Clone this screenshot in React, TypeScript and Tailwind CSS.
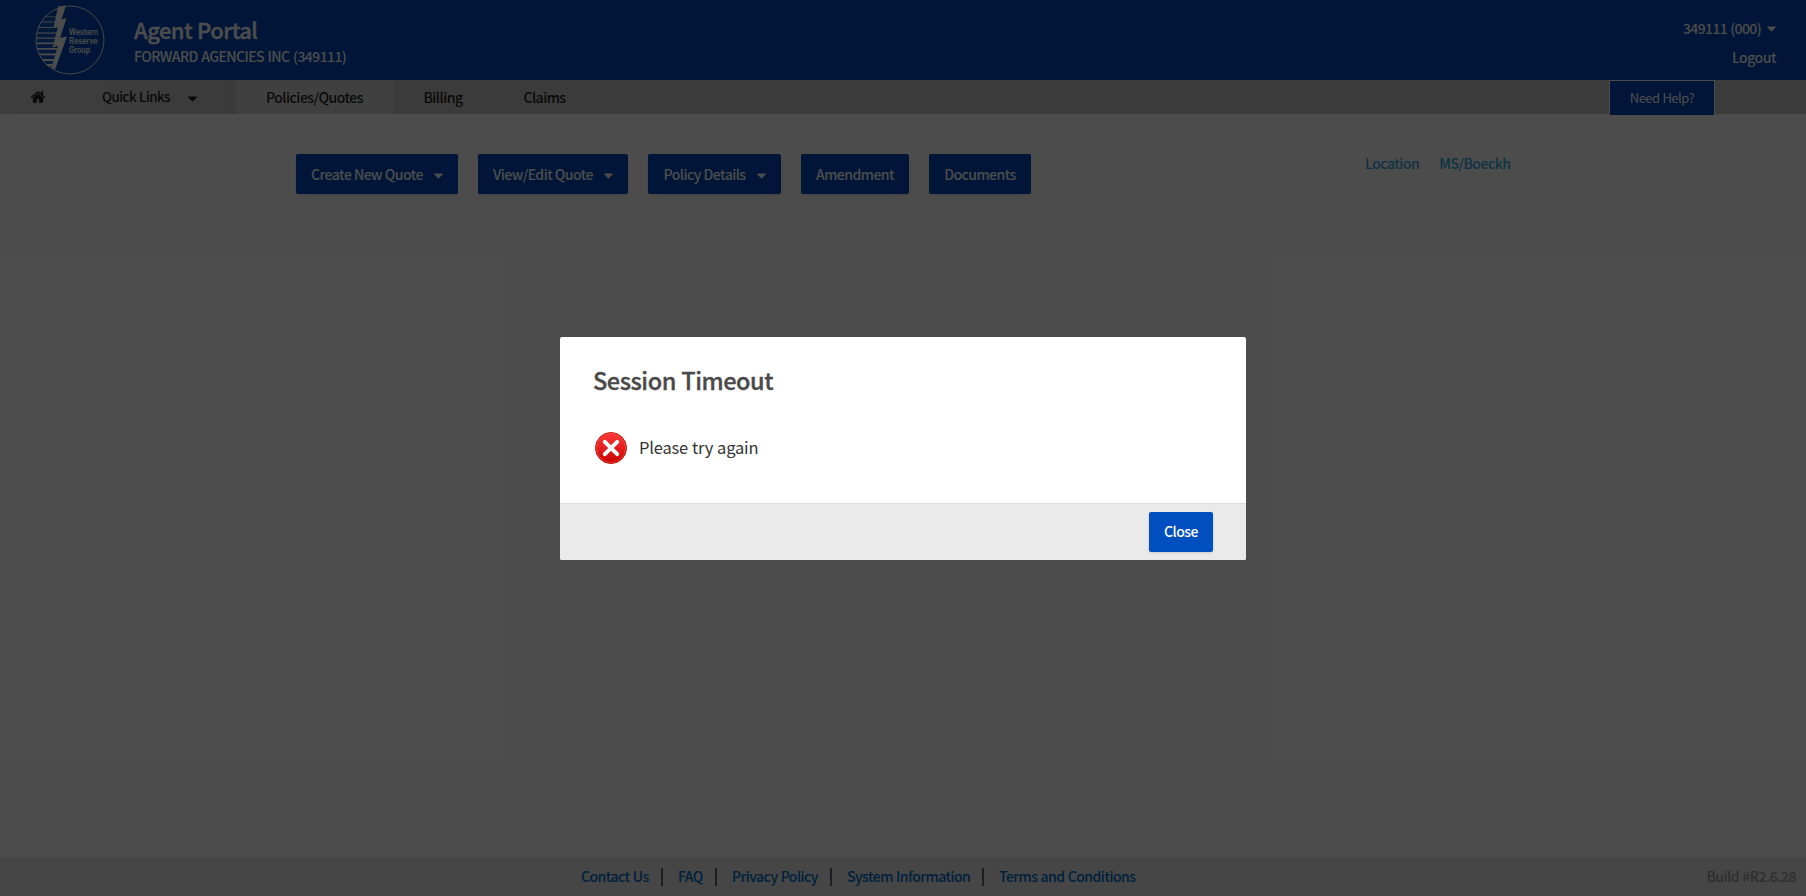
import React from "react";

function Caret({ className = "" }: { className?: string }) {
  return (
    <svg className={className} width="9" height="6" viewBox="0 0 9 6" fill="currentColor">
      <path d="M0.4 0.5H8.6Q9.2 0.6 8.7 1.2L5 5.2Q4.5 5.6 4 5.2L0.3 1.2Q-0.2 0.6 0.4 0.5Z" />
    </svg>
  );
}

function HomeIcon({ className = "" }: { className?: string }) {
  return (
    <svg className={className} viewBox="0 0 1792 1792" fill="currentColor">
      <path d="M1472 992v480q0 26-19 45t-45 19h-384v-384h-256v384h-384q-26 0-45-19t-19-45v-480q0-1 .5-3t.5-3l575-474 575 474q1 2 1 6zm223-69l-62 74q-8 9-21 11h-3q-13 0-21-7l-692-577-692 577q-12 8-24 7-13-2-21-11l-62-74q-8-10-7-23.5t11-21.5l719-599q32-26 76-26t76 26l244 204v-195q0-14 9-23t23-9h192q14 0 23 9t9 23v408l219 182q10 8 11 21.5t-7 23.5z" />
    </svg>
  );
}

const stripes = [
  { y: 17, h: 0.6 },
  { y: 22, h: 0.9 },
  { y: 27.5, h: 0.9 },
  { y: 33, h: 1 },
  { y: 38, h: 1.2 },
  { y: 43, h: 1.6 },
  { y: 48.5, h: 1.7 },
  { y: 54, h: 1.8 },
  { y: 59.5, h: 2 },
  { y: 64.5, h: 2.4 },
];

function Logo() {
  return (
    <svg className="shrink-0" width="70" height="70" viewBox="35.5 5.5 70 70">
      <defs>
        <clipPath id="disc">
          <path d="M70.5 6A34.5 34.5 0 0 0 55 71L62 48L53 47L60 28L54 28L60 6Z" />
        </clipPath>
      </defs>
      <g clipPath="url(#disc)">
        <rect x="36" y="16" width="30" height="60" fill="#2e70cf" opacity="0.4" />
        {stripes.map((s) => (
          <rect key={s.y} x="36" y={s.y} width="28" height={s.h} fill="#fff" />
        ))}
      </g>
      <circle cx="70.5" cy="40.5" r="34" fill="none" stroke="#fff" strokeWidth="0.9" />
      <path d="M58.5 7L66.5 6L62 20L67 18.5L60.5 38.5L67.5 37L55.5 70L52 68L58.5 46L53 48L58.5 27.5L54 28.5Z" fill="#fff" />
      <g fill="#fff" fontFamily="Roboto, 'Liberation Sans', sans-serif" fontSize="9.4" fontWeight="500" letterSpacing="0">
        <text x="69.5" y="35" textLength="29" lengthAdjust="spacingAndGlyphs">Western</text>
        <text x="69.5" y="44.3" textLength="28.5" lengthAdjust="spacingAndGlyphs">Reserve</text>
        <text x="69.5" y="53.4" textLength="21" lengthAdjust="spacingAndGlyphs">Group</text>
      </g>
    </svg>
  );
}

function ErrorIcon() {
  return (
    <svg className="shrink-0" width="32" height="32" viewBox="0 0 32 32">
      <defs>
        <linearGradient id="red" x1="0" y1="0" x2="0" y2="1">
          <stop offset="0" stopColor="#ff3a3a" />
          <stop offset="1" stopColor="#c80000" />
        </linearGradient>
      </defs>
      <circle cx="16" cy="16" r="15.5" fill="url(#red)" stroke="#c41a10" />
      <circle cx="16" cy="16" r="14.5" fill="none" stroke="#ff5a50" strokeOpacity="0.55" />
      <path d="M9.8 9.8L22.2 22.2M22.2 9.8L9.8 22.2" stroke="#fff" strokeWidth="4" strokeLinecap="round" />
    </svg>
  );
}

const actions = [
  { label: "Create New Quote", menu: true, width: "w-[162px]" },
  { label: "View/Edit Quote", menu: true, width: "w-[150px]" },
  { label: "Policy Details", menu: true, width: "w-[133px]" },
  { label: "Amendment", menu: false, width: "w-[108px]" },
  { label: "Documents", menu: false, width: "w-[102px]" },
];

const footerLinks = [
  { label: "Contact Us", box: "w-[82px]" },
  { label: "FAQ", box: "w-[54px] pl-[15px]" },
  { label: "Privacy Policy", box: "w-[115px] pl-[15px]" },
  { label: "System Information", box: "w-[152px] pl-[15px]" },
  { label: "Terms and Conditions", box: "pl-[15px]" },
];

export default function App() {
  return (
    <div className="relative flex h-[896px] w-[1806px] flex-col overflow-hidden bg-white font-['Noto_Sans_CJK_SC',sans-serif] text-[14px] leading-5 font-medium tracking-[-0.52px] whitespace-nowrap text-[#333] [word-spacing:0.5px]">
      <header className="flex h-20 shrink-0 items-start bg-[#0049ba] pr-[30px] pl-[35px] text-white">
        <div className="pt-[5px]">
          <Logo />
        </div>
        <div className="ml-[29px] pt-[14px]">
          <h1 className="text-[22px] leading-[30px] font-medium tracking-[-0.55px] [-webkit-text-stroke:0.35px_currentColor]">
            Agent Portal
          </h1>
          <p className="mt-0.5 tracking-[-0.58px] [word-spacing:1px]">FORWARD AGENCIES INC (349111)</p>
        </div>
        <div className="ml-auto flex flex-col items-end pt-[18px]">
          <div className="flex items-center tracking-[-0.62px]">
            349111 (000)
            <Caret className="mt-0.5 ml-[6px]" />
          </div>
          <div className="mt-[9px] tracking-[-0.47px]">Logout</div>
        </div>
      </header>

      <nav className="flex h-[34px] shrink-0 bg-[#c6c6c6] text-[#222]">
        <div className="flex w-[236px] items-center bg-linear-to-r from-[#cfcfcf] to-[#c4c4c4] pl-[30px]">
          <HomeIcon className="size-4" />
          <span className="-mt-px ml-[56px] text-[13.3px]">Quick Links</span>
          <Caret className="mt-[3px] ml-[18px]" />
        </div>
        <div className="flex w-[157px] items-center justify-center bg-[#d8d8d8] tracking-[-0.47px]">Policies/Quotes</div>
        <div className="flex w-[100px] items-center justify-center">Billing</div>
        <div className="flex w-[103px] items-center justify-center">Claims</div>
        <div className="mr-[91px] ml-auto flex h-9 w-[106px] items-center justify-center border border-white bg-[#0049ba] text-[13px] font-normal text-white">
          Need Help?
        </div>
      </nav>

      <main className="flex flex-1 items-start pt-10 pl-[296px]">
        <div className="flex gap-5">
          {actions.map((a) => (
            <button
              key={a.label}
              className={`flex h-10 items-center justify-center rounded-xs bg-[#0049ba] text-white shadow-sm ${a.width}`}
            >
              {a.label}
              {a.menu && <Caret className="mt-[3px] ml-[11px]" />}
            </button>
          ))}
        </div>
        <div className="-mt-px ml-[334px] flex gap-5 tracking-[-0.47px] text-[#30aae0]">
          <a>Location</a>
          <a>MS/Boeckh</a>
        </div>
      </main>

      <footer className="flex h-[39px] shrink-0 items-center bg-[#e6ebe8] pr-[10px] pl-[581px] text-[#006bd0]">
        {footerLinks.map((l, i) => (
          <div
            key={l.label}
            className={`flex h-[18px] items-center ${l.box} ${i < 4 ? "border-r-2 border-[#666]" : ""}`}
          >
            <span className="-mt-px">{l.label}</span>
          </div>
        ))}
        <span className="-mt-px ml-auto tracking-[-0.47px] text-[#999]">Build #R2.6.28</span>
      </footer>

      <div className="absolute inset-0 flex items-start justify-center bg-black/70 pt-[337px]">
        <section className="flex h-[223px] w-[686px] flex-col overflow-hidden rounded-xs bg-white">
          <h2 className="px-[33px] pt-[27px] text-[23.5px] leading-8 font-medium tracking-[-0.45px] text-[#4a4a4a] [-webkit-text-stroke:0.35px_currentColor]">
            Session Timeout
          </h2>
          <div className="mt-[36px] flex items-center pl-[35px]">
            <ErrorIcon />
            <p className="-mt-[3px] ml-3 text-[16.5px] leading-6 font-normal tracking-[-0.2px] text-[#333]">
              Please try again
            </p>
          </div>
          <div className="mt-auto flex h-[57px] justify-end border-t border-[#dcdcdc] bg-[#eaeaea] pt-[8px] pr-[33px]">
            <button className="h-10 w-16 rounded-xs bg-[#004ec0] pb-0.5 text-white shadow-sm">Close</button>
          </div>
        </section>
      </div>
    </div>
  );
}
